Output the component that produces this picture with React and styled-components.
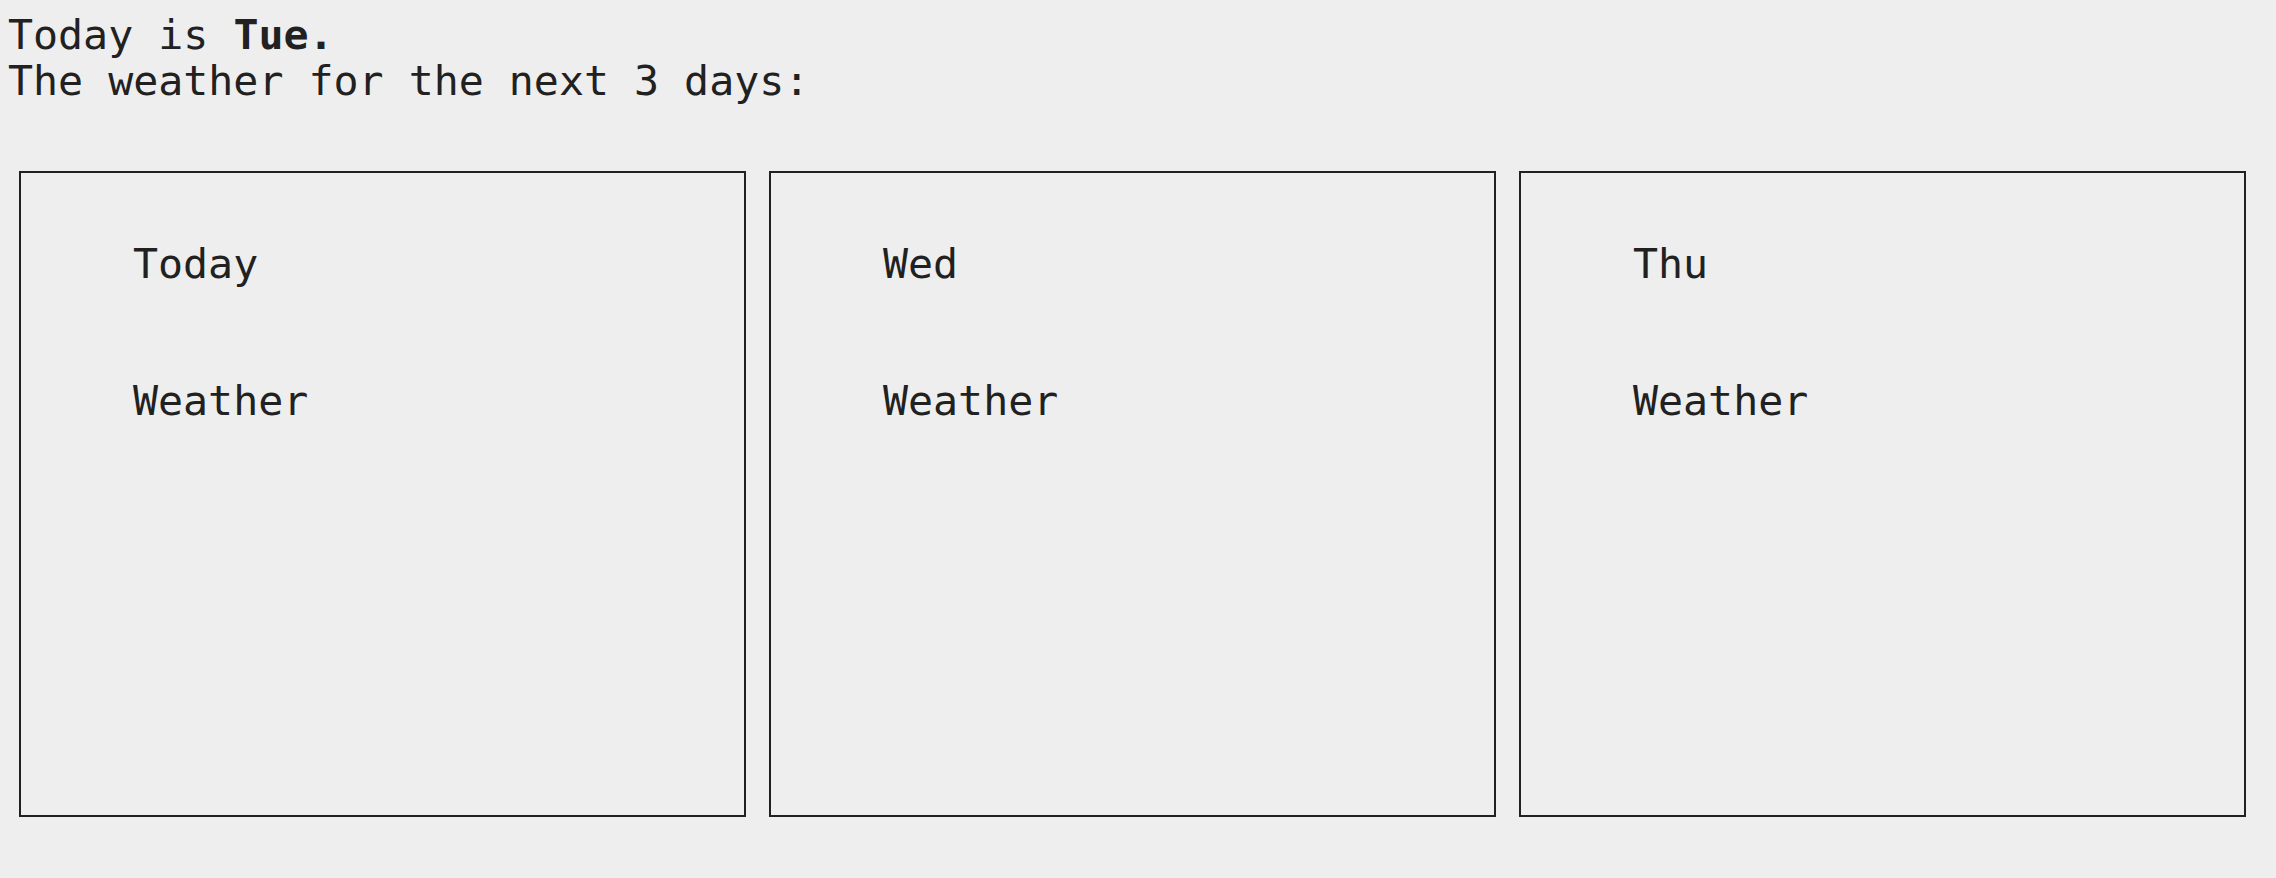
import React from 'react'
import styled, { createGlobalStyle } from 'styled-components'

const GlobalStyle = createGlobalStyle`
  html, body {
    margin: 0;
    background: #eeeeee;
  }
  body {
    padding: 12px 8px 0 8px;
    font-family: "DejaVu Sans Mono", monospace;
    font-size: 41.6px;
    line-height: 45.8px;
    color: #212121;
  }
`

const Intro = styled.div`
  margin: 0;
`

const Line = styled.p`
  margin: 0;
  white-space: pre;
`

const Forecast = styled.div`
  display: grid;
  grid-template-columns: repeat(3, 727px);
  gap: 23px;
  margin-top: 67px;
  padding-left: 11px;
`

const DayCard = styled.div`
  box-sizing: border-box;
  height: 646px;
  border: 2px solid #212121;
  padding: 68px 0 0 112px;
`

const DayName = styled.div`
  margin-bottom: 92px;
`

const WeatherText = styled.div``

const days = ['Today', 'Wed', 'Thu']

export default function App() {
    return (
        <>
            <GlobalStyle />
            <Intro>
                <Line>Today is <b>Tue.</b></Line>
                <Line>The weather for the next 3 days:</Line>
            </Intro>
            <Forecast>
                {days.map(day => (
                    <DayCard key={day}>
                        <DayName>{day}</DayName>
                        <WeatherText>Weather</WeatherText>
                    </DayCard>
                ))}
            </Forecast>
        </>
    )
}
